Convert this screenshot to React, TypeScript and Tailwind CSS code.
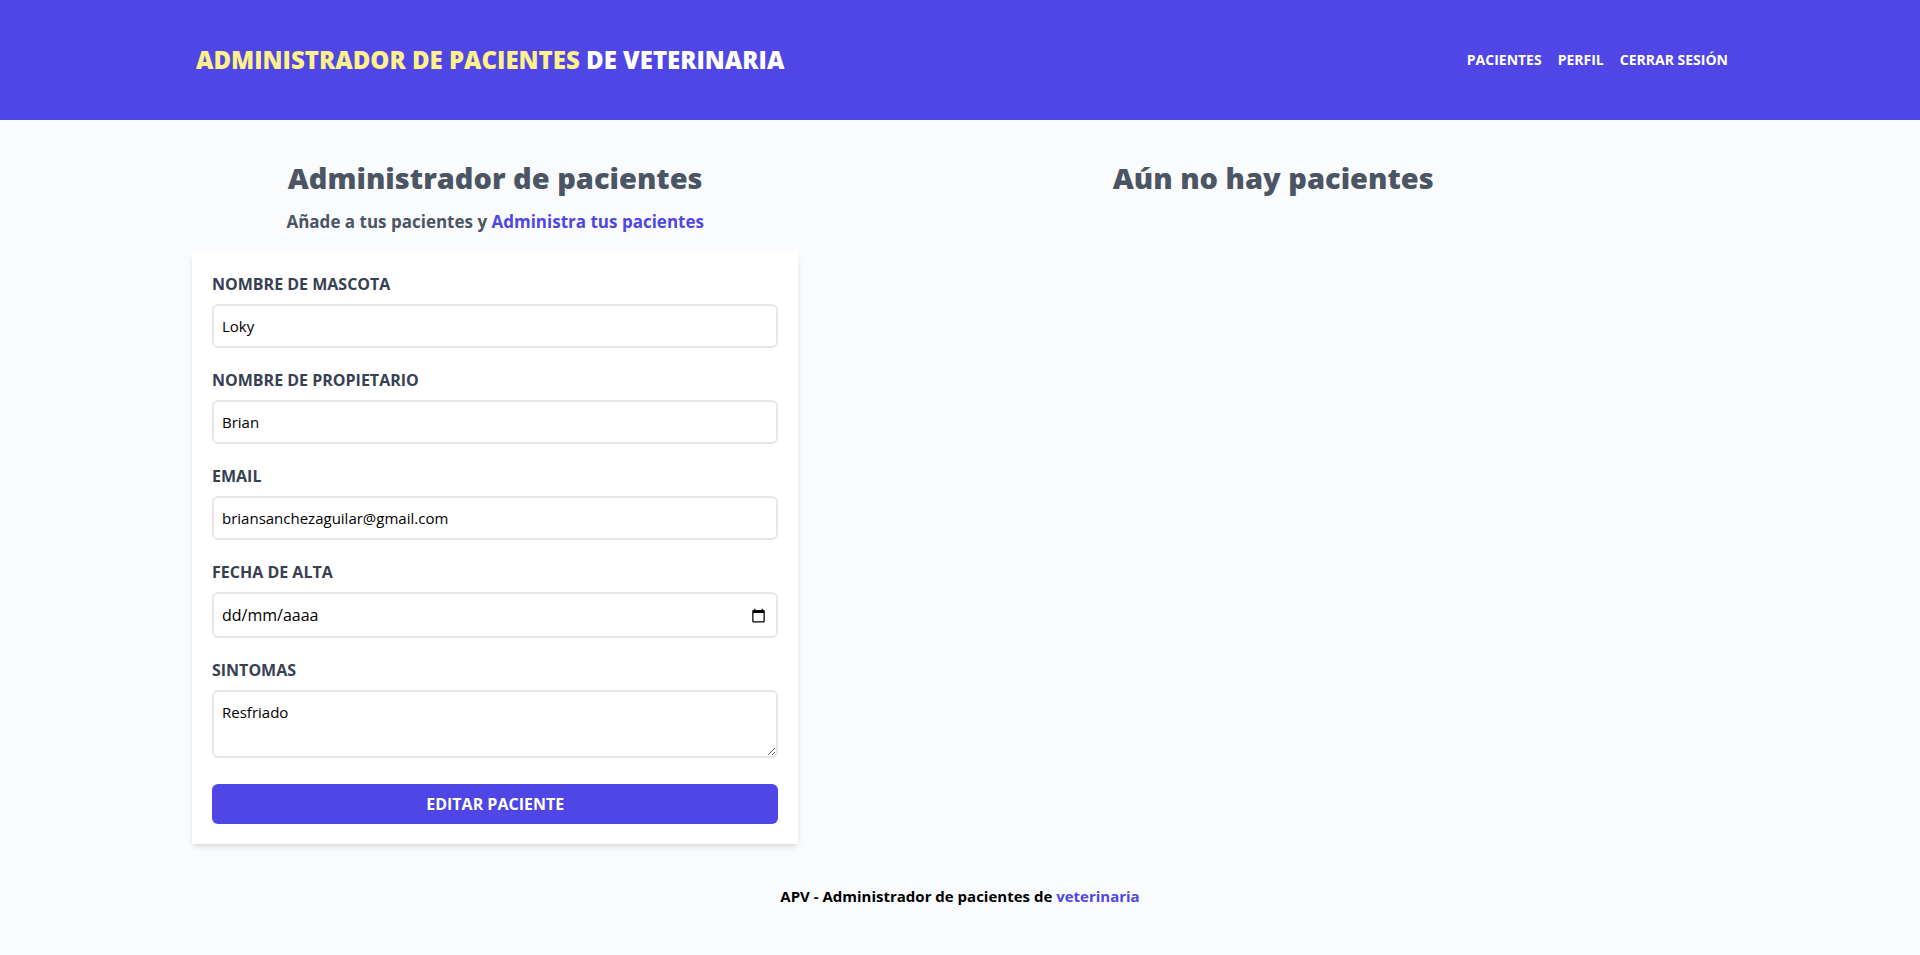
import { useState } from "react";

const campos = [
  { id: "nombre", etiqueta: "Nombre de mascota", tipo: "text", valor: "Loky" },
  { id: "propietario", etiqueta: "Nombre de propietario", tipo: "text", valor: "Brian" },
  { id: "email", etiqueta: "Email", tipo: "email", valor: "briansanchezaguilar@gmail.com" },
];

const claseEtiqueta = "block font-bold uppercase text-[#374151]";
const claseCampo =
  "mt-2 block w-full rounded-md border-2 border-[#e5e7eb] bg-white p-2 text-[15px] leading-6 text-black";

function Header() {
  return (
    <header className="bg-[#4f46e5] py-11">
      <div className="mx-auto flex max-w-[1536px] items-center justify-between">
        <h1 className="px-1 text-2xl font-black uppercase text-[#fef08a]">
          Administrador de Pacientes <span className="text-white">de Veterinaria</span>
        </h1>
        <nav className="flex gap-4 text-sm font-bold uppercase text-white">
          <a href="#pacientes">Pacientes</a>
          <a href="#perfil">Perfil</a>
          <button type="button" className="font-bold uppercase">
            Cerrar sesión
          </button>
        </nav>
      </div>
    </header>
  );
}

function CampoFecha() {
  const [fecha, setFecha] = useState("");
  return (
    <div className="mb-5">
      <label htmlFor="fecha" className={claseEtiqueta}>
        Fecha de alta
      </label>
      <div className="mt-2 flex h-[46px] w-full items-center justify-between rounded-md border-2 border-[#e5e7eb] bg-white p-2">
        <input
          id="fecha"
          type="text"
          placeholder="dd/mm/aaaa"
          value={fecha}
          onChange={(e) => setFecha(e.target.value)}
          className="min-w-0 flex-1 text-black outline-none placeholder:text-black"
        />
        <button type="button" aria-label="Abrir calendario" className="px-0.5">
          <svg viewBox="0 0 24 24" className="size-[15px]" fill="currentColor" aria-hidden="true">
            <path d="M20 3h-1V1h-2v2H7V1H5v2H4c-1.1 0-2 .9-2 2v16c0 1.1.9 2 2 2h16c1.1 0 2-.9 2-2V5c0-1.1-.9-2-2-2zm0 18H4V8h16v13z" />
          </svg>
        </button>
      </div>
    </div>
  );
}

function Formulario() {
  return (
    <form className="mt-4 bg-white p-5 shadow-md">
      {campos.map((c) => (
        <div key={c.id} className="mb-5">
          <label htmlFor={c.id} className={claseEtiqueta}>
            {c.etiqueta}
          </label>
          <input id={c.id} type={c.tipo} defaultValue={c.valor} className={claseCampo} />
        </div>
      ))}
      <CampoFecha />
      <div className="mb-[26px]">
        <label htmlFor="sintomas" className={claseEtiqueta}>
          Sintomas
        </label>
        <textarea id="sintomas" rows={2} defaultValue="Resfriado" className={claseCampo} />
      </div>
      <button
        type="button"
        className="w-full rounded-md bg-[#4f46e5] p-2 font-bold uppercase text-white"
      >
        Editar paciente
      </button>
    </form>
  );
}

export default function App() {
  return (
    <div className="min-h-screen bg-[#fafbfd] font-['Open_Sans','Noto_Sans',sans-serif]">
      <Header />
      <main className="mx-auto mt-10 flex max-w-[1536px] gap-5">
        <section className="w-2/5">
          <h2 className="text-center text-[29px] leading-9 font-black text-[#4b5563]">
            Administrador de pacientes
          </h2>
          <p className="mt-3 text-center text-[17px] leading-7 font-bold text-[#4b5563]">
            Añade a tus pacientes y <span className="text-[#4f46e5]">Administra tus pacientes</span>
          </p>
          <Formulario />
        </section>
        <section className="w-3/5">
          <h2 className="text-center text-[29px] leading-9 font-black text-[#4b5563]">
            Aún no hay pacientes
          </h2>
        </section>
      </main>
      <footer className="py-10 text-center text-[15px] leading-6 font-bold text-black">
        APV - Administrador de pacientes de <span className="text-[#4f46e5]">veterinaria</span>
      </footer>
    </div>
  );
}
